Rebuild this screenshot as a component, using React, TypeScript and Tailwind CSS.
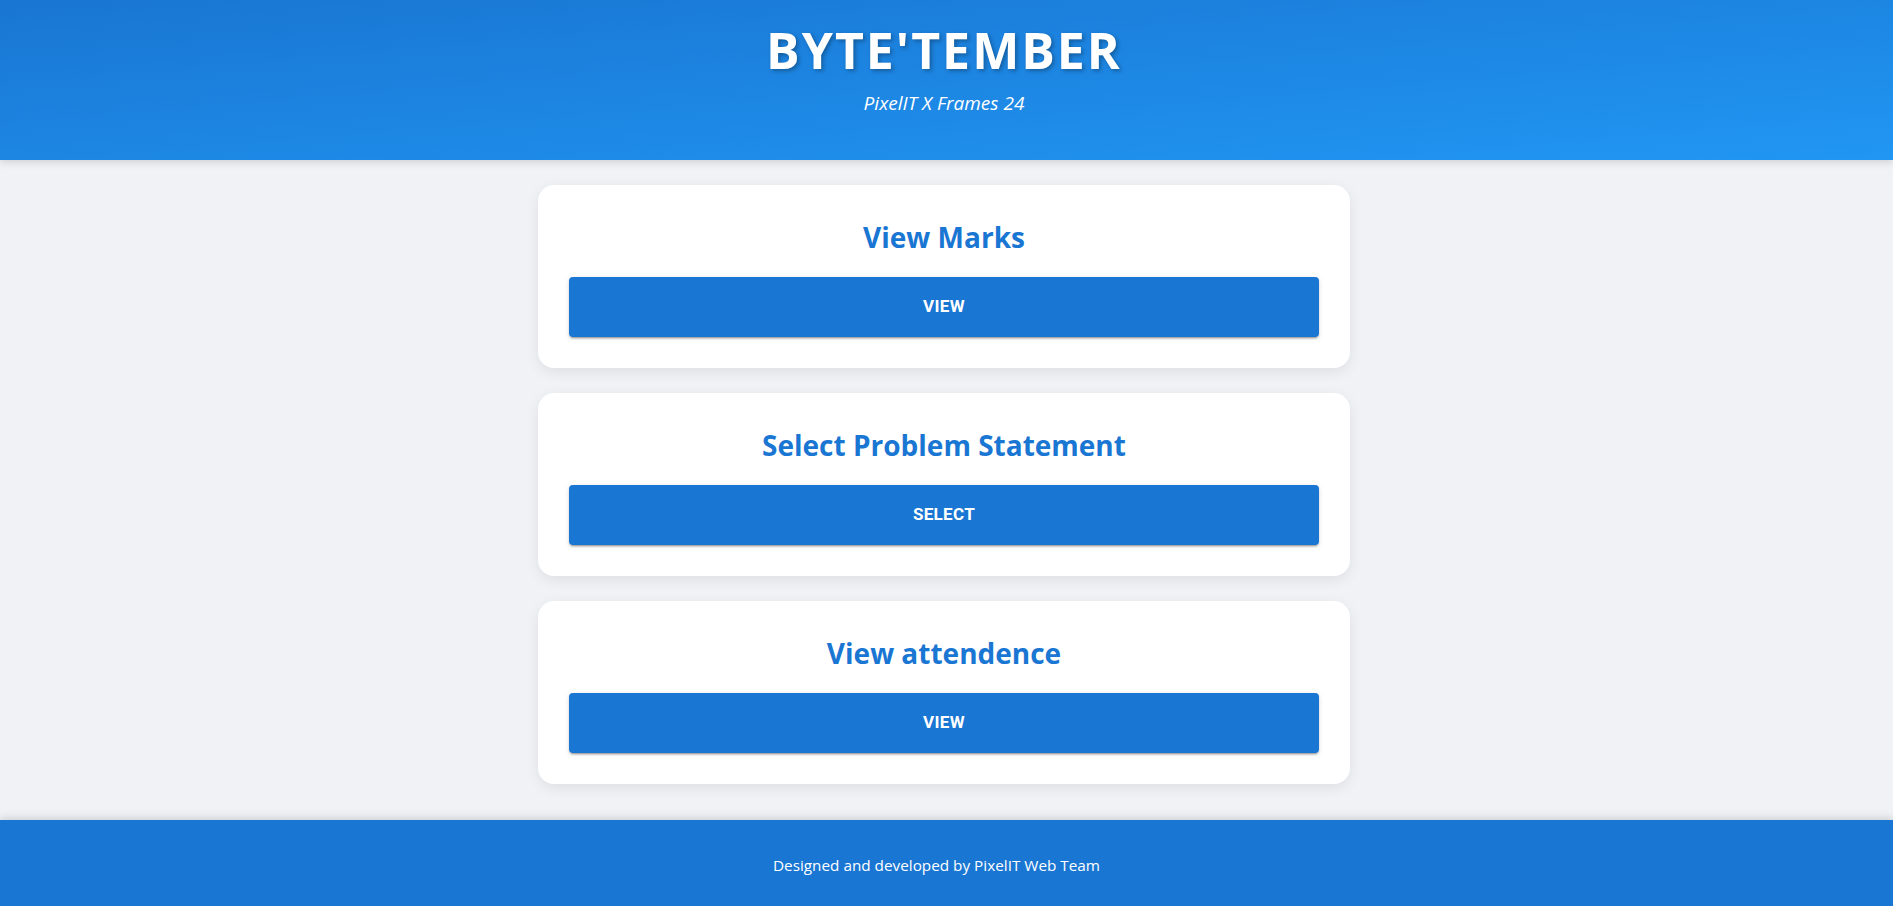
const cards = [
  { title: "View Marks", action: "View" },
  { title: "Select Problem Statement", action: "Select" },
  { title: "View attendence", action: "View" },
];

const ActionCard = ({ title, action }: { title: string; action: string }) => {
  return (
    <div className="w-[812px] mx-auto bg-white rounded-2xl shadow-[0_4px_14px_rgba(0,0,0,0.08)] px-[31px] pt-[35px] pb-[31px] text-center">
      <h2 className="text-[28px] leading-[34px] font-bold text-[#1976d2] mb-[23px] font-['Open_Sans',sans-serif]">
        {title}
      </h2>
      <button className="w-full h-[60px] rounded bg-[#1976d2] text-white uppercase font-bold text-[17px] tracking-[0.02em] font-['Roboto',sans-serif] shadow-[0_3px_1px_-2px_rgba(0,0,0,0.2),0_2px_2px_0_rgba(0,0,0,0.14),0_1px_5px_0_rgba(0,0,0,0.12)]">
        {action}
      </button>
    </div>
  );
};

export default function App() {
  return (
    <div className="min-h-screen flex flex-col bg-[#f0f2f5] font-['Open_Sans',sans-serif]">
      <header className="h-[160px] shrink-0 bg-gradient-to-br from-[#1976d2] to-[#2196f3] text-white text-center pt-[20px] pr-[5px] shadow-[0_2px_8px_rgba(0,0,0,0.15)] relative z-10">
        <h1 className="text-[50px] leading-[1.2] font-bold tracking-[2px] [text-shadow:2px_2px_4px_rgba(0,0,0,0.3)]">
          BYTE'TEMBER
        </h1>
        <p className="text-[19px] italic mt-[9px]">PixelIT X Frames 24</p>
      </header>
      <main className="flex-1 flex flex-col gap-[25px] pt-[25px] pb-[32px] pr-[5px]">
        {cards.map((c) => (
          <ActionCard key={c.title} title={c.title} action={c.action} />
        ))}
      </main>
      <footer className="h-[86px] shrink-0 bg-[#1976d2] text-white flex items-center justify-center pt-[4px] pr-[20px] text-[15.3px] shadow-[0_-2px_8px_rgba(0,0,0,0.15)]">
        Designed and developed by PixelIT Web Team
      </footer>
    </div>
  );
}
